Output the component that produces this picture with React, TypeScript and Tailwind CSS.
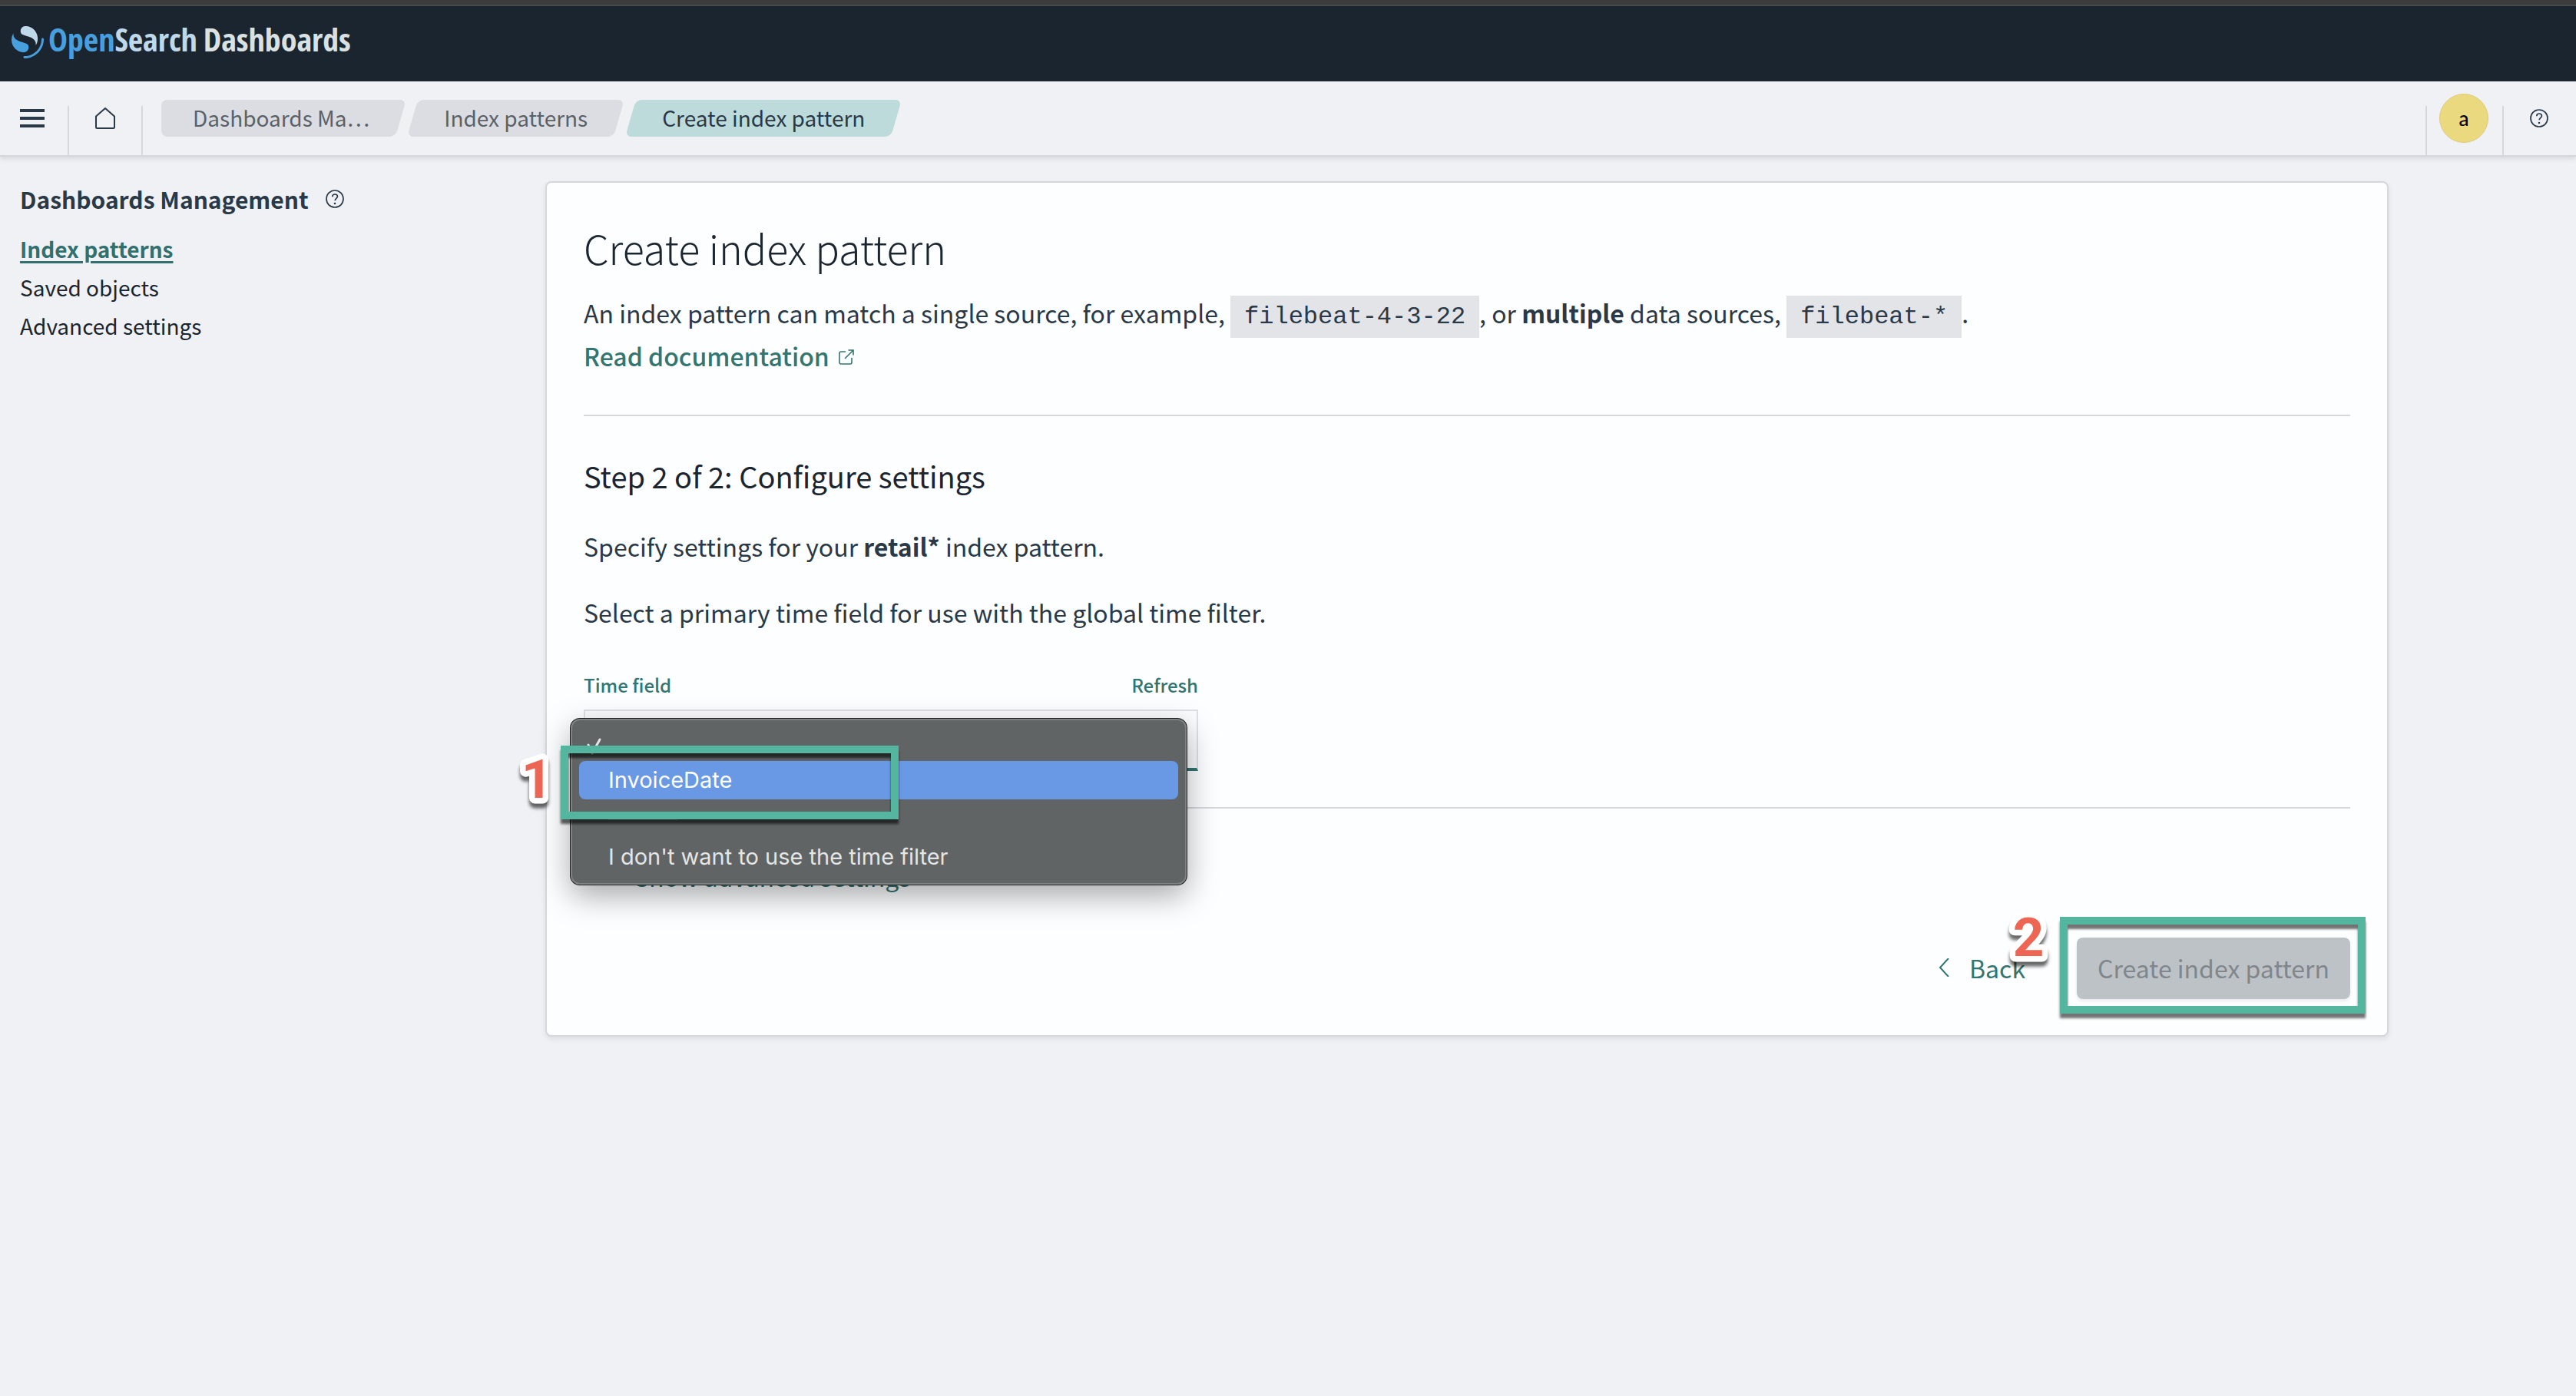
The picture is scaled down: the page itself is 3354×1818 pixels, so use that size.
import React from 'react';

const SANS = "font-['Noto_Sans_CJK_SC','Noto_Sans',sans-serif]";

function HelpIcon() {
  return (
    <svg viewBox="0 0 24 24" className="size-6" fill="none" stroke="#2a3947" strokeWidth="1.7" aria-hidden="true">
      <circle cx="12" cy="12" r="11" />
      <path d="M8.8 9.2c0-2 1.4-3.2 3.3-3.2s3.3 1.2 3.3 2.9c0 2.4-3.2 2.6-3.2 5.3" />
      <circle cx="12" cy="18" r="1.3" fill="#2a3947" stroke="none" />
    </svg>
  );
}

function LogoMark() {
  return (
    <svg viewBox="0 0 64 64" className="h-11 w-[42px]" aria-hidden="true">
      <path fill="#479fdd" d="M61.7374 23.5C60.4878 23.5 59.4748 24.513 59.4748 25.7626C59.4748 44.3813 44.3813 59.4748 25.7626 59.4748C24.513 59.4748 23.5 60.4878 23.5 61.7374C23.5 62.987 24.513 64 25.7626 64C46.8805 64 64 46.8805 64 25.7626C64 24.513 62.987 23.5 61.7374 23.5Z" />
      <path fill="#bfd8ea" d="M48.0814 38C50.2572 34.4505 52.3615 29.7178 51.9475 23.0921C51.0899 9.36725 38.6589 -1.04463 26.9206 0.0837327C22.3253 0.525465 17.6068 4.2712 18.026 10.9805C18.2082 13.8961 19.6352 15.6169 21.9544 16.9399C24.1618 18.1992 26.9978 18.9969 30.2128 19.9011C34.0962 20.9934 38.6009 22.2203 42.063 24.7717C46.2125 27.8295 49.0491 31.3743 48.0814 38Z" />
      <path fill="#479fdd" d="M3.91861 14C1.74276 17.5495 -0.361506 22.2822 0.0524931 28.9079C0.910072 42.6327 13.3411 53.0446 25.0794 51.9163C29.6747 51.4745 34.3932 47.7288 33.974 41.0195C33.7918 38.1039 32.3647 36.3831 30.0456 35.0601C27.8382 33.8008 25.0022 33.0031 21.7872 32.0989C17.9038 31.0066 13.3991 29.7797 9.93694 27.2283C5.78746 24.1704 2.95092 20.6257 3.91861 14Z" />
    </svg>
  );
}

function Crumb({ label, first, current }: { label: string; first?: boolean; current?: boolean }) {
  const tone = current ? 'bg-[#bedbdb]' : 'bg-[#dcdde2]';
  return (
    <li className="relative flex h-12 items-center px-[41px] pb-[2px]">
      <span className={`absolute inset-0 -skew-x-16 rounded-lg ${tone}`} />
      {first && <span className="absolute -left-2 inset-y-0 w-6 bg-[#f0f1f4]" />}
      {first && <span className={`absolute inset-y-0 left-0 w-1/2 rounded-l-lg ${tone}`} />}
      <a
        href="#"
        aria-current={current ? 'page' : undefined}
        className={`relative text-[28px] leading-9 ${current ? 'text-[#2a3947]' : 'text-[#5a6268]'}`}
      >
        {label}
      </a>
    </li>
  );
}

function Header() {
  return (
    <header>
      <div className="h-2 border-b-2 border-[#474a4a] bg-[#3c3c3c]" />
      <div className="flex h-[98px] items-center bg-[#1b2530] pb-1 pl-[15px]">
        <a href="#" className="flex items-center gap-[6px]">
          <LogoMark />
          <span className="flex gap-2 pb-2 font-['Open_Sans_Condensed','Noto_Sans_ExtraCondensed','Liberation_Sans_Narrow','Noto_Sans_CJK_SC',sans-serif] text-[42px] font-bold leading-[48px] text-[#d9e1e2]">
            <span>
              <span className="text-[#479fdd]">Open</span>
              <span className="text-[#bfd8ea]">Search</span>
            </span>
            <span>Dashboards</span>
          </span>
        </a>
      </div>
      <div className="relative flex h-[98px] border-b-2 border-[#d5d7dc] bg-[#f0f1f4] shadow-[0_3px_6px_rgba(100,110,130,0.18)]">
        <button type="button" aria-label="Toggle navigation" className="mt-8 flex w-[90px] justify-center border-r-2 border-[#d5d7dc] pr-1">
          <svg viewBox="0 0 32 24" className="mt-1 h-6 w-8" fill="#2a3947" aria-hidden="true">
            <path d="M0 0h32v4H0zM0 10h32v4H0zM0 20h32v4H0z" />
          </svg>
        </button>
        <a href="#" aria-label="Home" className="mt-8 flex w-24 justify-center border-r-2 border-[#d5d7dc]">
          <svg viewBox="0 0 26 28" className="mt-[2px] h-7 w-[26px]" fill="none" stroke="#2a3947" strokeWidth="2" strokeLinejoin="round" aria-hidden="true">
            <path d="M13 1 1 11.5V25.5q0 1.5 1.5 1.5h21q1.5 0 1.5-1.5V11.5Z" />
          </svg>
        </a>
        <nav aria-label="Breadcrumbs" className="ml-6 mt-6">
          <ol className="flex gap-[15px]">
            <Crumb label="Dashboards Ma…" first />
            <Crumb label="Index patterns" />
            <Crumb label="Create index pattern" current />
          </ol>
        </nav>
        <div className="ml-auto flex">
          <div className="mt-8 w-[2px] bg-[#d5d7dc]" />
          <button type="button" aria-label="Account" className="ml-4 mr-[18px] mt-4 flex size-16 items-center justify-center rounded-full border border-[#dfcb78] bg-[#ebd980] font-['Lato',sans-serif] text-[26px] font-medium text-black">
            a
          </button>
          <div className="mt-8 w-[2px] bg-[#d5d7dc]" />
          <button type="button" aria-label="Help" className="flex h-[84px] w-[94px] items-center justify-center pb-1 pr-[2px] pt-4">
            <HelpIcon />
          </button>
        </div>
      </div>
    </header>
  );
}

function Sidebar() {
  return (
    <aside className="w-[466px] shrink-0 pl-[26px] pt-[31px]">
      <div className="flex items-center gap-[22px]">
        <h2 className="text-[30px] font-bold leading-[48px] text-[#2a3947]">Dashboards Management</h2>
        <HelpIcon />
      </div>
      <nav aria-label="Dashboards Management" className="mt-4 text-[28px] leading-[50px] text-[#1b2530]">
        <ul>
          <li>
            <a href="#" aria-current="page" className="font-bold text-[#31706e] underline decoration-[3px] underline-offset-4">Index patterns</a>
          </li>
          <li><a href="#">Saved objects</a></li>
          <li><a href="#">Advanced settings</a></li>
        </ul>
      </nav>
    </aside>
  );
}

function Code({ children }: { children: React.ReactNode }) {
  return (
    <code className="bg-[#e3e4e8] px-[18px] py-[9px] font-['Liberation_Mono',monospace] text-[32px] leading-none">
      {children}
    </code>
  );
}

function Callout({ digit, className }: { digit: string; className: string }) {
  return (
    <svg
      viewBox="0 0 60 80"
      className={`absolute h-20 w-[60px] overflow-visible drop-shadow-[0_6px_2px_rgba(0,0,0,0.6)] ${className}`}
    >
      <text
        x="30"
        y="64"
        textAnchor="middle"
        fill="#ec6653"
        stroke="#ffffff"
        strokeWidth="15"
        strokeLinejoin="round"
        paintOrder="stroke"
        className="font-['Roboto',sans-serif] text-[71px] font-bold"
      >
        {digit}
      </text>
    </svg>
  );
}

function TimeFieldMenu() {
  return (
    <div className="absolute -left-[17px] top-[12px] w-[802px]">
      <ul
        role="listbox"
        aria-label="Time field options"
        className="h-[216px] rounded-xl border-2 border-[#7f8382] bg-[#606465] px-[9px] pt-1 font-['Inter',sans-serif] text-[29px] leading-[50px] text-[#e4e5e5] shadow-[0_0_0_1px_#1d2020,0_14px_40px_rgba(0,0,0,0.35)]"
      >
        <li role="option" aria-selected="true" className="h-[49px] pl-2 pt-[19px]">
          <svg viewBox="0 0 22 24" className="h-6 w-[22px]" fill="none" stroke="#e4e5e5" strokeWidth="3" strokeLinecap="round" strokeLinejoin="round" aria-hidden="true">
            <path d="M4 9l5 11L19 2" />
          </svg>
        </li>
        <li role="option" aria-selected="false" className="rounded-lg bg-[#6998e4] pl-[38px] text-white">InvoiceDate</li>
        <li role="separator" className="h-[50px] pl-[38px] pt-[25px]">
          <div className="h-[2px] w-[90px] bg-[#8b8e8e]" />
        </li>
        <li role="option" aria-selected="false" className="pl-[38px]">I don't want to use the time filter</li>
      </ul>
      <div className="absolute -left-[13px] top-[35px] h-24 w-[440px] border-[10px] border-[#55b69f] shadow-[0_6px_3px_rgba(0,0,0,0.6),inset_0_6px_3px_rgba(0,0,0,0.6)]" />
      <Callout digit="1" className="-left-[74px] top-[39px]" />
    </div>
  );
}

function TimeField() {
  return (
    <div className="mt-[49px] w-[800px]">
      <div className="flex items-center justify-between text-[24px] font-medium leading-9 text-[#327571]">
        <label htmlFor="time-field">Time field</label>
        <button type="button">Refresh</button>
      </div>
      <div className="relative mt-[14px]">
        <select id="time-field" className="block h-20 w-full appearance-none border-2 border-b-4 border-[#dde1e4] border-b-[#327571] bg-[#fbfcfd]">
          <option> </option>
        </select>
        <TimeFieldMenu />
      </div>
    </div>
  );
}

function CreatePanel() {
  return (
    <section className="mx-auto max-w-[2400px] rounded-lg border-2 border-[#d5d7dc] bg-[#fdfeff] px-12 pb-[47px] pt-[49px] text-[32px] leading-[56px] text-[#2a3947] shadow-[0_3px_6px_rgba(100,110,130,0.15)]">
      <h1 className="mb-5 text-[52px] font-light leading-[72px] text-[#1b2530]">Create index pattern</h1>
      <p>
        An index pattern can match a single source, for example, <Code>filebeat-4-3-22</Code>, or <strong>multiple</strong> data sources, <Code>filebeat-*</Code>.
      </p>
      <a href="#" className="flex w-fit items-center gap-3 font-medium text-[#327571]">
        Read documentation
        <svg viewBox="0 0 20 20" className="mt-1 size-5" fill="none" stroke="#327571" strokeWidth="1.6" aria-hidden="true">
          <path d="M9 3H3Q1 3 1 5V17Q1 19 3 19H15Q17 19 17 17V11M8 12 18.5 1.5M12.5 1H19V7.5" />
        </svg>
      </a>
      <hr className="mt-[49px] border-t-2 border-[#d5d7dc]" />
      <h2 className="mt-12 text-[38px] leading-[60px] text-[#1b2530]">Step 2 of 2: Configure settings</h2>
      <p className="mt-[33px]">Specify settings for your <strong>retail*</strong> index pattern.</p>
      <p className="mt-[30px]">Select a primary time field for use with the global time filter.</p>
      <TimeField />
      <hr className="mt-[47px] border-t-2 border-[#d5d7dc]" />
      <button type="button" className="mt-12 flex h-20 items-center gap-7 px-6 text-[#327571]">
        <svg viewBox="0 0 14 24" className="h-6 w-[14px]" fill="none" stroke="#327571" strokeWidth="2" aria-hidden="true">
          <path d="M1 1l11 11L1 23" />
        </svg>
        Show advanced settings
      </button>
      <div className="mt-10 flex items-center justify-end gap-[67px]">
        <button type="button" className="flex items-center gap-[26px] pb-[2px] text-[#327571]">
          <svg viewBox="0 0 14 24" className="h-6 w-[14px]" fill="none" stroke="#327571" strokeWidth="2" aria-hidden="true">
            <path d="M13 0 2 12l11 12" />
          </svg>
          Back
        </button>
        <div className="relative">
          <button type="button" disabled className="h-20 rounded-lg bg-[#bdc2c7] px-[27px] pb-[2px] text-[#80868b] shadow-[0_3px_4px_rgba(120,130,150,0.15)]">
            Create index pattern
          </button>
          <div className="absolute -bottom-[19px] -left-[22px] -right-[20px] -top-[27px] border-[10px] border-[#55b69f] shadow-[0_6px_3px_rgba(0,0,0,0.55),inset_0_6px_3px_rgba(0,0,0,0.55)]" />
          <Callout digit="2" className="-left-[93px] -top-10" />
        </div>
      </div>
    </section>
  );
}

export default function App() {
  return (
    <div className={`min-h-screen bg-[#f0f1f4] ${SANS}`}>
      <Header />
      <div className="flex">
        <Sidebar />
        <main className="min-w-0 flex-1 pt-8">
          <CreatePanel />
        </main>
      </div>
    </div>
  );
}
